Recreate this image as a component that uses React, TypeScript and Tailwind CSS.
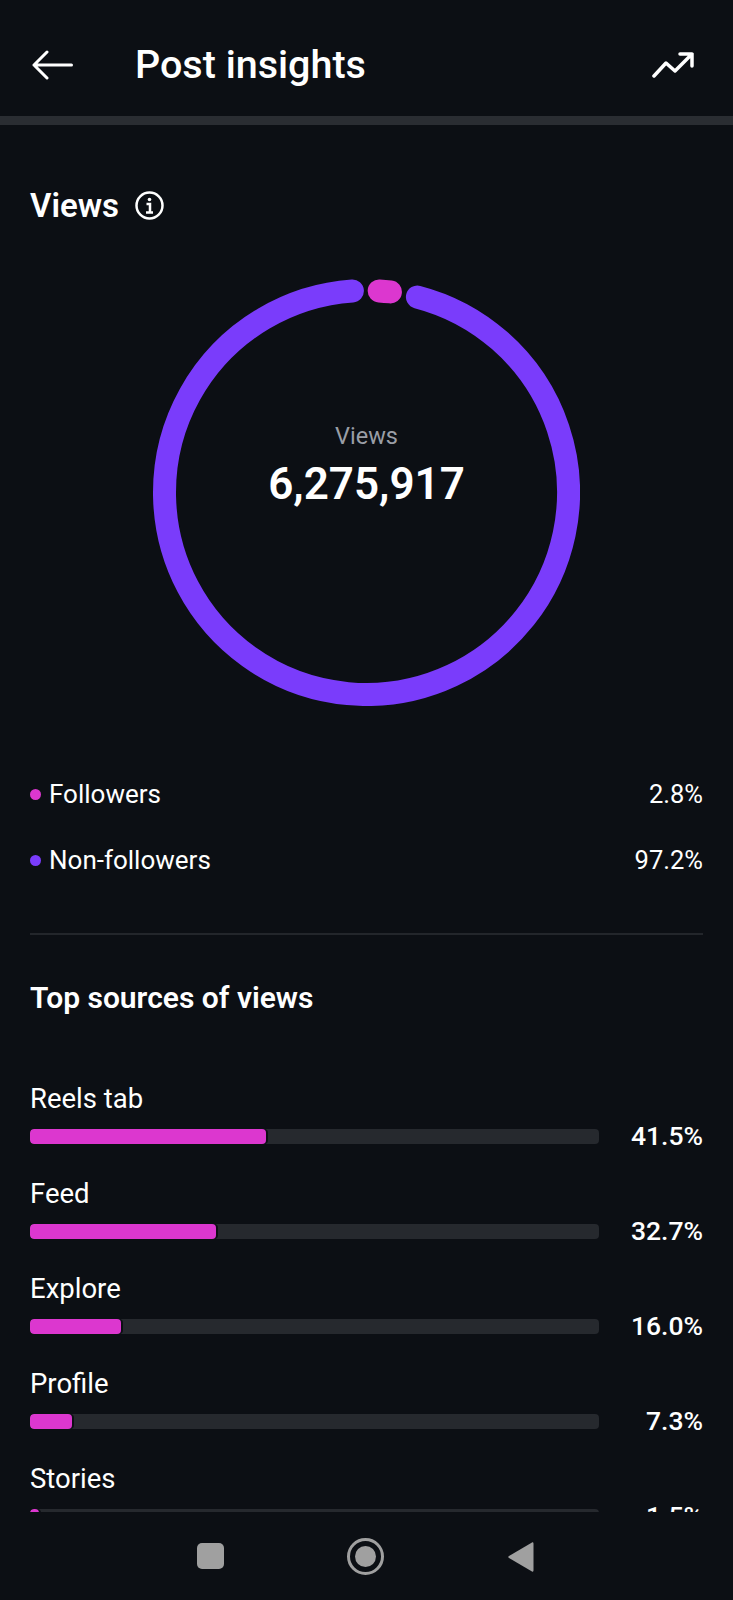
const sources = [
  { label: "Reels tab", value: "41.5%", width: 41.5 },
  { label: "Feed", value: "32.7%", width: 32.7 },
  { label: "Explore", value: "16.0%", width: 16.0 },
  { label: "Profile", value: "7.3%", width: 7.3 },
  { label: "Stories", value: "1.5%", width: 1.5 },
];

function arc(startDeg: number, endDeg: number) {
  const r = 202;
  const c = 213.5;
  const pt = (deg: number) => {
    const a = (deg * Math.PI) / 180;
    return `${(c + r * Math.sin(a)).toFixed(2)} ${(c - r * Math.cos(a)).toFixed(2)}`;
  };
  const large = (endDeg - startDeg + 360) % 360 > 180 ? 1 : 0;
  return `M${pt(startDeg)} A${r} ${r} 0 ${large} 1 ${pt(endDeg)}`;
}

function Ring() {
  return (
    <svg width="427" height="427" viewBox="0 0 427 427" fill="none" className="absolute inset-0">
      <path d={arc(14.6, 356)} stroke="#7a3cfb" strokeWidth="23" strokeLinecap="round" />
      <path d={arc(3.6, 6.8)} stroke="#dc37cf" strokeWidth="23" strokeLinecap="round" />
    </svg>
  );
}

export default function App() {
  return (
    <div className="h-[1600px] w-[733px] overflow-hidden bg-[#0c0f14] text-white font-['Roboto',sans-serif] flex flex-col">
      <header className="h-[116px] shrink-0 flex items-center pl-[32px] pr-[39px] pt-[14px] pb-0">
        <svg width="41" height="30" viewBox="0 0 41 30" fill="none" stroke="white" strokeWidth="3" strokeLinecap="round" strokeLinejoin="round">
          <path d="M39.5 15H2M15 2L2 15L15 28" />
        </svg>
        <h1 className="ml-[62px] text-[39.5px] font-medium leading-none flex-1">Post insights</h1>
        <svg width="42" height="26" viewBox="0 0 42 26" fill="none" stroke="white" strokeWidth="3.5" strokeLinecap="round" strokeLinejoin="round">
          <path d="M2 24L14 11L23 19L40 2M28 2H40V14" />
        </svg>
      </header>
      <div className="h-[9px] shrink-0 bg-[#2a2d32]" />

      <main className="h-[1387px] shrink-0 overflow-hidden px-[30px]">
        <div className="mt-[60px] h-[40px] flex items-center gap-[16px]">
          <h2 className="text-[33px] font-semibold leading-none">Views</h2>
          <svg width="29" height="29" viewBox="0 0 29 29" fill="none" stroke="white">
            <circle cx="14.5" cy="14.5" r="13" strokeWidth="2.5" />
            <path d="M11.5 13H15V21M11 21.5H18" strokeWidth="2.5" />
            <circle cx="14.5" cy="8.5" r="1.8" fill="white" stroke="none" />
          </svg>
        </div>

        <div className="relative mx-auto mt-[54px] h-[427px] w-[427px]">
          <Ring />
          <div className="absolute inset-0 flex flex-col items-center pt-[144px]">
            <span className="text-[23.5px] leading-[26px] text-[#9a9ea6]">Views</span>
            <span className="mt-[9px] text-[44px] leading-[52px] font-semibold">6,275,917</span>
          </div>
        </div>

        <ul className="mt-[80px] flex flex-col gap-[50px]">
          <li className="h-[16px] flex items-center justify-between text-[26px]">
            <span className="flex items-center gap-[8px]">
              <span className="h-[11px] w-[11px] rounded-full bg-[#dc37cf]" />
              Followers
            </span>
            <span className="text-[25.5px]">2.8%</span>
          </li>
          <li className="h-[16px] flex items-center justify-between text-[26px]">
            <span className="flex items-center gap-[8px]">
              <span className="h-[11px] w-[11px] rounded-full bg-[#7a3cfb]" />
              Non-followers
            </span>
            <span className="text-[25.5px]">97.2%</span>
          </li>
        </ul>

        <div className="mt-[65px] h-[2px] bg-[#23262b]" />

        <h2 className="mt-[46px] text-[30px] leading-[34px] font-semibold">Top sources of views</h2>

        <div className="mt-[69px] flex flex-col">
          {sources.map((s) => (
            <div key={s.label} className="h-[95px] shrink-0">
              <div className="h-[30px] text-[27.5px] leading-[30px]">{s.label}</div>
              <div className="mt-[7px] flex items-center">
                <div className="h-[15px] w-[569px] rounded-[4px] bg-[#26292e] overflow-hidden">
                  <div
                    className="h-full rounded-[4px] bg-[#dc37cf] shadow-[2px_0_0_#0c0f14]"
                    style={{ width: `${s.width}%` }}
                  />
                </div>
                <span className="flex-1 text-right text-[26.5px] leading-[30px] font-medium">{s.value}</span>
              </div>
            </div>
          ))}
        </div>
      </main>

      <nav className="flex-1 relative flex items-start">
        <div className="ml-[197px] mt-[31px] h-[26px] w-[27px] rounded-[5px] bg-[#a0a0a0]" />
        <div className="ml-[123px] mt-[26px] flex h-[37px] w-[37px] items-center justify-center rounded-full border-[3px] border-[#a0a0a0]">
          <div className="h-[21px] w-[21px] rounded-full bg-[#a0a0a0]" />
        </div>
        <svg className="ml-[124px] mt-[29px]" width="26" height="32" viewBox="0 0 26 32" fill="#a0a0a0">
          <path d="M24 1.5C25 1 25.5 1.5 25.5 3V29C25.5 30.5 25 31 24 30.5L1 17C0 16.3 0 15.7 1 15Z" />
        </svg>
      </nav>
    </div>
  );
}
